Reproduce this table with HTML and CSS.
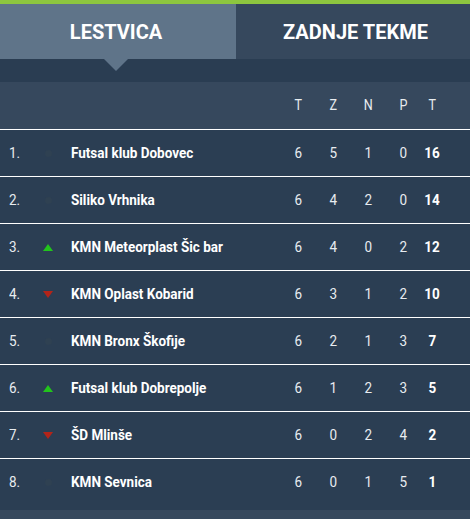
FILE: index.html
```html
<!DOCTYPE html>
<html>
<head>
<meta charset="utf-8">
<link rel="stylesheet" href="styles.css">
</head>
<body>
<div class="widget">
  <div class="topbar"></div>
  <div class="tabs">
    <div class="tab active">LESTVICA</div>
    <div class="tab second">ZADNJE TEKME</div>
  </div>
  <div class="band"><span class="pointer"></span></div>
  <div class="table">
    <div class="row head">
      <span></span><span></span><span></span>
      <span class="num"><b>T</b></span><span class="num"><b>Z</b></span><span class="num"><b>N</b></span><span class="num"><b>P</b></span><span class="num"><b>T</b></span>
    </div>
    <div class="row">
      <span class="pos"><b>1.</b></span><span class="ind"><i class="dot"></i></span><span class="name"><b>Futsal klub Dobovec</b></span>
      <span class="num"><b>6</b></span><span class="num"><b>5</b></span><span class="num"><b>1</b></span><span class="num"><b>0</b></span><span class="num pts"><b>16</b></span>
    </div>
    <div class="row">
      <span class="pos"><b>2.</b></span><span class="ind"><i class="dot"></i></span><span class="name"><b>Siliko Vrhnika</b></span>
      <span class="num"><b>6</b></span><span class="num"><b>4</b></span><span class="num"><b>2</b></span><span class="num"><b>0</b></span><span class="num pts"><b>14</b></span>
    </div>
    <div class="row">
      <span class="pos"><b>3.</b></span><span class="ind"><i class="up"></i></span><span class="name"><b>KMN Meteorplast Šic bar</b></span>
      <span class="num"><b>6</b></span><span class="num"><b>4</b></span><span class="num"><b>0</b></span><span class="num"><b>2</b></span><span class="num pts"><b>12</b></span>
    </div>
    <div class="row">
      <span class="pos"><b>4.</b></span><span class="ind"><i class="down"></i></span><span class="name"><b>KMN Oplast Kobarid</b></span>
      <span class="num"><b>6</b></span><span class="num"><b>3</b></span><span class="num"><b>1</b></span><span class="num"><b>2</b></span><span class="num pts"><b>10</b></span>
    </div>
    <div class="row">
      <span class="pos"><b>5.</b></span><span class="ind"><i class="dot"></i></span><span class="name"><b>KMN Bronx Škofije</b></span>
      <span class="num"><b>6</b></span><span class="num"><b>2</b></span><span class="num"><b>1</b></span><span class="num"><b>3</b></span><span class="num pts"><b>7</b></span>
    </div>
    <div class="row">
      <span class="pos"><b>6.</b></span><span class="ind"><i class="up"></i></span><span class="name"><b>Futsal klub Dobrepolje</b></span>
      <span class="num"><b>6</b></span><span class="num"><b>1</b></span><span class="num"><b>2</b></span><span class="num"><b>3</b></span><span class="num pts"><b>5</b></span>
    </div>
    <div class="row">
      <span class="pos"><b>7.</b></span><span class="ind"><i class="down"></i></span><span class="name"><b>ŠD Mlinše</b></span>
      <span class="num"><b>6</b></span><span class="num"><b>0</b></span><span class="num"><b>2</b></span><span class="num"><b>4</b></span><span class="num pts"><b>2</b></span>
    </div>
    <div class="row last">
      <span class="pos"><b>8.</b></span><span class="ind"><i class="dot"></i></span><span class="name"><b>KMN Sevnica</b></span>
      <span class="num"><b>6</b></span><span class="num"><b>0</b></span><span class="num"><b>1</b></span><span class="num"><b>5</b></span><span class="num pts"><b>1</b></span>
    </div>
  </div>
  <div class="footer"></div>
</div>
</body>
</html>
```
FILE: styles.css
```css
html, body {
  margin: 0;
  padding: 0;
  background: #2b3e53;
}
body {
  font-family: Roboto, "Liberation Sans", sans-serif;
  color: #ffffff;
}
.widget {
  width: 470px;
  height: 519px;
  display: flex;
  flex-direction: column;
  background: #2b3e53;
}
.topbar {
  height: 4px;
  background: #8dc63f;
}
.tabs {
  display: grid;
  grid-template-columns: 236px 1fr;
  height: 55px;
  background: #36485d;
}
.tab {
  display: flex;
  align-items: center;
  justify-content: center;
  font-size: 20px;
  font-weight: 700;
  color: #ffffff;
}
.tab.active {
  background: #5f7489;
  padding-right: 4px;
}
.tab.second {
  padding-left: 5px;
}
.band {
  height: 23px;
  background: #2a3d52;
  position: relative;
}
.pointer {
  position: absolute;
  left: 104px;
  top: 0;
  width: 0;
  height: 0;
  border-left: 12px solid transparent;
  border-right: 12px solid transparent;
  border-top: 12px solid #5f7489;
}
.table {
  display: flex;
  flex-direction: column;
  padding-bottom: 5px;
}
.row {
  display: grid;
  grid-template-columns: 30px 18px 1fr 35px 35px 35px 35px 22px;
  align-items: center;
  height: 46px;
  padding: 0 27px 0 9px;
  border-bottom: 1px solid #ffffff;
  font-size: 15.5px;
}
.row.head {
  background: #36485d;
  height: 47px;
  font-size: 14.5px;
}
.row.last {
  border-bottom: none;
}
.row b {
  display: inline-block;
  font-weight: 400;
  transform: scaleX(0.87);
  white-space: nowrap;
}
.pos {
  color: #e8ecf0;
}
.pos b {
  transform-origin: left center;
}
.ind {
  display: flex;
  justify-content: center;
  align-items: center;
}
.dot {
  display: block;
  width: 7px;
  height: 7px;
  border-radius: 50%;
  background: #2f4152;
}
.up {
  display: block;
  width: 0;
  height: 0;
  border-left: 5px solid transparent;
  border-right: 5px solid transparent;
  border-bottom: 7px solid #22c41c;
}
.down {
  display: block;
  width: 0;
  height: 0;
  border-left: 5px solid transparent;
  border-right: 5px solid transparent;
  border-top: 7px solid #b32419;
}
.name {
  padding-left: 14px;
  white-space: nowrap;
  overflow: visible;
}
.name b {
  font-weight: 700;
  transform-origin: left center;
}
.num {
  text-align: center;
  color: #e8ecf0;
}
.pts b {
  font-weight: 700;
  color: #ffffff;
}
.footer {
  margin-top: auto;
  height: 9px;
  background: #36485d;
}
```
